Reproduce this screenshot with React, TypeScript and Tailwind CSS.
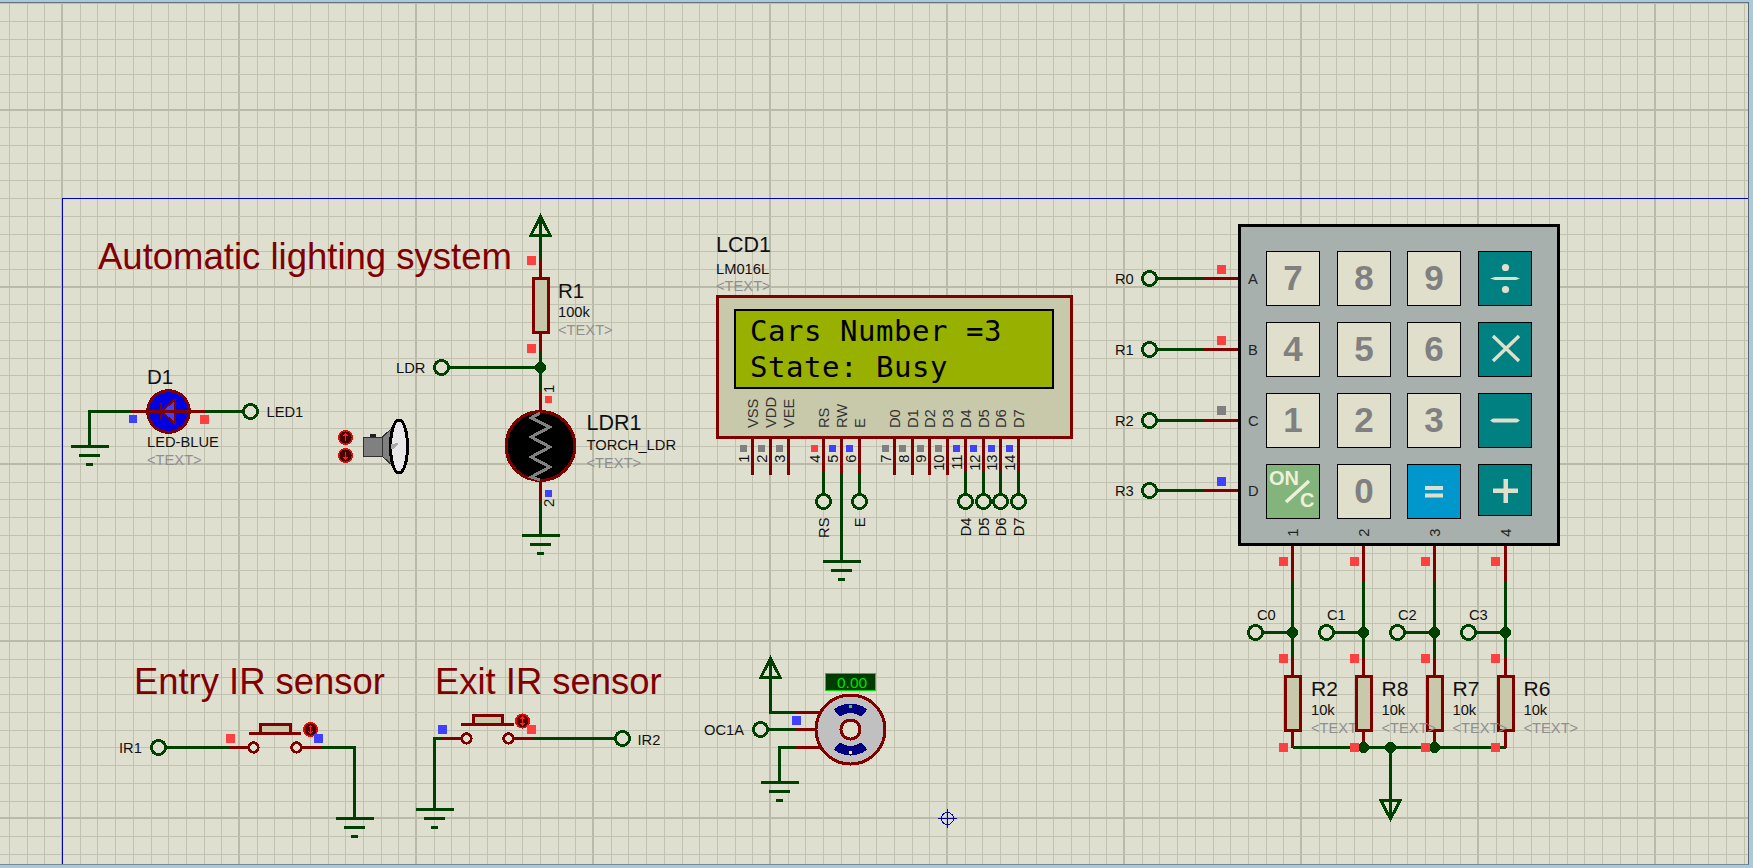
import React from "react";

const GREEN = "#004000";
const RED = "#800000";
const PAPER = "#dfdfd0";
const BODY = "#c8c8aa";
const SQ_RED = "#ff4040";
const SQ_BLUE = "#4040ff";
const SQ_GREY = "#808080";
const INK = "#111111";
const FAINT = "#8f8f8f";

type Pts = [number, number][];

function Line({ pts, c = GREEN, w = 3 }: { pts: Pts; c?: string; w?: number }) {
  return <polyline points={pts.map((p) => p.join(",")).join(" ")} fill="none" stroke={c} strokeWidth={w} strokeLinejoin="miter" />;
}
function Sq({ x, y, c = SQ_RED, s = 9 }: { x: number; y: number; c?: string; s?: number }) {
  return <rect x={x} y={y} width={s} height={s} fill={c} />;
}
function Term({ x, y }: { x: number; y: number }) {
  return <circle cx={x} cy={y} r={7} fill={PAPER} stroke={GREEN} strokeWidth={3} />;
}
function Node({ x, y }: { x: number; y: number }) {
  return <circle cx={x} cy={y} r={5.5} fill={GREEN} />;
}
function Gnd({ x, y }: { x: number; y: number }) {
  return (
    <g>
      <Line pts={[[x - 19, y], [x + 19, y]]} />
      <Line pts={[[x - 10.5, y + 9], [x + 10.5, y + 9]]} />
      <Line pts={[[x - 3.5, y + 18], [x + 3.5, y + 18]]} />
    </g>
  );
}
function Arrow({ x, tip, base }: { x: number; tip: number; base: number }) {
  return <polygon points={`${x},${tip} ${x + 9.5},${base} ${x - 9.5},${base}`} fill="none" stroke={GREEN} strokeWidth={3} />;
}
function Res({ x, y1, y2 }: { x: number; y1: number; y2: number }) {
  return <rect x={x - 7.5} y={y1} width={15} height={y2 - y1} fill={BODY} stroke={RED} strokeWidth={3} />;
}
function T({ x, y, s = 14.7, c = INK, a, r, children }: { x: number; y: number; s?: number; c?: string; a?: "start" | "middle" | "end"; r?: boolean; children: React.ReactNode }) {
  return (
    <text x={x} y={y} fontSize={s} fill={c} textAnchor={a} transform={r ? `rotate(-90 ${x} ${y})` : undefined}>
      {children}
    </text>
  );
}
function Push({ l, r, y, bx1, bx2, cx1, cx2, by, dx, dy }: { l: number; r: number; y: number; bx1: number; bx2: number; cx1: number; cx2: number; by: number; dx: number; dy: number }) {
  return (
    <g>
      <circle cx={l} cy={y} r={4.7} fill={PAPER} stroke={RED} strokeWidth={3} />
      <circle cx={r} cy={y} r={4.7} fill={PAPER} stroke={RED} strokeWidth={3} />
      <rect x={cx1} y={by - 9} width={cx2 - cx1} height={9} fill={BODY} stroke={RED} strokeWidth={3} />
      <Line pts={[[bx1, by], [bx2, by]]} c={RED} />
      <Dot x={dx} y={dy} />
      <Line pts={[[dx, dy - 4], [dx, dy + 4]]} c="#ff2020" w={1.5} />
      <polyline points={`${dx - 2},${dy - 2} ${dx},${dy - 4} ${dx + 2},${dy - 2}`} fill="none" stroke="#ff2020" strokeWidth={1} />
      <polyline points={`${dx - 2},${dy + 2} ${dx},${dy + 4} ${dx + 2},${dy + 2}`} fill="none" stroke="#ff2020" strokeWidth={1} />
    </g>
  );
}
function Dot({ x, y }: { x: number; y: number }) {
  return <circle cx={x} cy={y} r={6.8} fill="#4a0000" stroke="#ff0000" strokeWidth={1.5} />;
}
function Sector({ cx, cy, top }: { cx: number; cy: number; top: boolean }) {
  const ro = 26;
  const ri = 16.5;
  const a = (40 * Math.PI) / 180;
  const s = top ? -1 : 1;
  const p = (rad: number, sign: number) => `${cx + sign * rad * Math.sin(a)},${cy + s * rad * Math.cos(a)}`;
  const sweepOut = top ? 1 : 0;
  const sweepIn = top ? 0 : 1;
  return <path d={`M${p(ro, -1)} A${ro},${ro} 0 0 ${sweepOut} ${p(ro, 1)} L${p(ri, 1)} A${ri},${ri} 0 0 ${sweepIn} ${p(ri, -1)} Z`} fill="#000080" />;
}

const GX = Array.from({ length: 100 }, (_, i) => i - 4);
const GY = Array.from({ length: 50 }, (_, i) => i - 7);

function Paper() {
  return (
    <svg width={1753} height={868} className="absolute left-0 top-[-3px]" shapeRendering="crispEdges">
      {GX.map((k) => {
        const major = k % 10 === 0;
        const x = Math.floor(62.5 + 17.7 * k);
        return <rect key={k} x={major ? x - 1 : x} y={0} width={major ? 2 : 1} height={868} fill={major ? "#b9baa8" : "#c0c1af"} />;
      })}
      {GY.map((k) => {
        const major = k % 10 === 0;
        const y = Math.floor(110 + 17.72 * k);
        return <rect key={k} x={0} y={major ? y - 1 : y} width={1753} height={major ? 2 : 1} fill={major ? "#b9baa8" : "#c0c1af"} />;
      })}
    </svg>
  );
}

type KeyDef = { label?: string; kind: "digit" | "div" | "mul" | "sub" | "add" | "eq" | "on" };
const KEYS: KeyDef[] = [
  { label: "7", kind: "digit" }, { label: "8", kind: "digit" }, { label: "9", kind: "digit" }, { kind: "div" },
  { label: "4", kind: "digit" }, { label: "5", kind: "digit" }, { label: "6", kind: "digit" }, { kind: "mul" },
  { label: "1", kind: "digit" }, { label: "2", kind: "digit" }, { label: "3", kind: "digit" }, { kind: "sub" },
  { kind: "on" }, { label: "0", kind: "digit" }, { kind: "eq" }, { kind: "add" },
];

const INKL = "#dfdfcb";

function Key({ k }: { k: KeyDef }) {
  if (k.kind === "digit") {
    return <div className="flex h-[55px] w-[54px] items-center justify-center border border-black bg-[#dfdfcb] text-[35px] font-bold text-[#808080]">{k.label}</div>;
  }
  if (k.kind === "on") {
    return (
      <div className="h-[55px] w-[54px] border border-black bg-[#82b47c]">
        <svg width={52} height={53} className="block">
          <text x={2} y={20} fontSize={20} fontWeight={700} fill="#eef0d8">ON</text>
          <text x={33} y={42} fontSize={20} fontWeight={700} fill="#eef0d8">C</text>
          <line x1={19} y1={37} x2={42} y2={16} stroke="#eef0d8" strokeWidth={3.5} />
        </svg>
      </div>
    );
  }
  if (k.kind === "eq") {
    return (
      <div className="h-[55px] w-[54px] border border-black bg-[#0098cc]">
        <svg width={52} height={53} className="block">
          <rect x={17} y={21} width={18} height={4} fill={INKL} />
          <rect x={17} y={28.5} width={18} height={4} fill={INKL} />
        </svg>
      </div>
    );
  }
  const h = k.kind === "add" ? "h-[52px]" : "h-[55px]";
  return (
    <div className={`w-[54px] border border-black bg-[#008080] ${h}`}>
      <svg width={52} height={53} className="block">
        {k.kind === "div" && (
          <g fill={INKL}>
            <circle cx={26.5} cy={15.5} r={3.6} />
            <circle cx={26.5} cy={37.5} r={3.6} />
            <polygon points="11,26.5 16,25 37,25 41,26.5 37,28 16,28" />
          </g>
        )}
        {k.kind === "mul" && <g stroke={INKL} strokeWidth={3.4}><line x1={14} y1={13} x2={40} y2={38} /><line x1={40} y1={13} x2={14} y2={38} /></g>}
        {k.kind === "sub" && <polygon points="11,26.5 14,24.5 38,24.5 41,26.5 38,28.5 14,28.5" fill={INKL} />}
        {k.kind === "add" && <g fill={INKL}><rect x={14} y={23.5} width={25} height={4.5} /><rect x={24.5} y={14} width={4.5} height={24} /></g>}
      </svg>
    </div>
  );
}

function Keypad() {
  return (
    <div className="absolute left-[1238px] top-[221px] h-[322px] w-[322px] border-[3px] border-black bg-[#a8b0ae] pl-[25px] pt-[24px]">
      <div className="grid grid-cols-[71px_70px_71px_54px] grid-rows-[71px_71px_71px_55px]">
        {KEYS.map((k, i) => <Key key={i} k={k} />)}
      </div>
    </div>
  );
}

function Lcd() {
  return (
    <div className="absolute left-[716px] top-[292px] h-[144px] w-[357px] border-[3px] border-[#800000] bg-[#c8c8aa] pl-[15px] pt-[11px]">
      <div className="h-[80px] w-[320px] border-2 border-black bg-[#98b000] pl-[14px] pt-[2px] font-['DejaVu_Sans_Mono',monospace] text-[29px] leading-[36px] tracking-[0.55px] whitespace-pre text-black">
        <div>Cars Number =3</div>
        <div>State: Busy</div>
      </div>
    </div>
  );
}

const LCD_PINS: { x: number; n: string; name: string; sq: number; sc: string }[] = [
  { x: 752.5, n: "1", name: "VSS", sq: 740, sc: SQ_GREY },
  { x: 770.5, n: "2", name: "VDD", sq: 758, sc: SQ_GREY },
  { x: 788.5, n: "3", name: "VEE", sq: 776, sc: SQ_GREY },
  { x: 823.5, n: "4", name: "RS", sq: 811, sc: SQ_RED },
  { x: 841.5, n: "5", name: "RW", sq: 829, sc: SQ_BLUE },
  { x: 859.5, n: "6", name: "E", sq: 846, sc: SQ_BLUE },
  { x: 894.5, n: "7", name: "D0", sq: 882, sc: SQ_GREY },
  { x: 912.5, n: "8", name: "D1", sq: 899, sc: SQ_GREY },
  { x: 929.5, n: "9", name: "D2", sq: 917, sc: SQ_GREY },
  { x: 947.5, n: "10", name: "D3", sq: 935, sc: SQ_GREY },
  { x: 965.5, n: "11", name: "D4", sq: 953, sc: SQ_BLUE },
  { x: 983.5, n: "12", name: "D5", sq: 970, sc: SQ_BLUE },
  { x: 1000.5, n: "13", name: "D6", sq: 988, sc: SQ_BLUE },
  { x: 1018.5, n: "14", name: "D7", sq: 1006, sc: SQ_BLUE },
];
const TERM_D = [
  { x: 965.5, n: "D4" },
  { x: 983.5, n: "D5" },
  { x: 1000.5, n: "D6" },
  { x: 1018.5, n: "D7" },
];
const ROWS = [
  { y: 278.5, n: "R0", l: "A", sy: 265, c: SQ_RED },
  { y: 349.5, n: "R1", l: "B", sy: 336, c: SQ_RED },
  { y: 420.5, n: "R2", l: "C", sy: 406, c: SQ_GREY },
  { y: 490.5, n: "R3", l: "D", sy: 477, c: SQ_BLUE },
];
const COLS = [
  { x: 1292.5, n: "1", c: "C0", tx: 1255.5, lx: 1257, sq: 1279, r: "R2", rx: 1311 },
  { x: 1363.5, n: "2", c: "C1", tx: 1326.5, lx: 1327, sq: 1350, r: "R8", rx: 1381.5 },
  { x: 1434.5, n: "3", c: "C2", tx: 1397.5, lx: 1398, sq: 1421, r: "R7", rx: 1452.5 },
  { x: 1505.5, n: "4", c: "C3", tx: 1468.5, lx: 1469, sq: 1491, r: "R6", rx: 1523.5 },
];

function Drawing() {
  return (
    <svg width={1753} height={868} className="absolute left-0 top-[-3px]" shapeRendering="crispEdges">
      {/* sheet border */}
      <rect x={62} y={198} width={1700} height={1} fill="#0000c0" />
      <rect x={62} y={198} width={1} height={680} fill="#0000c0" />

      {/* titles */}
      <g>
        <T x={98} y={269} s={36.5} c={RED}>Automatic lighting system</T>
        <T x={134} y={694} s={36.4} c={RED}>Entry IR sensor</T>
        <T x={435} y={694} s={36.4} c={RED}>Exit IR sensor</T>
      </g>

      {/* LED D1 */}
      <Line pts={[[89.5, 446], [89.5, 411.5], [132, 411.5]]} />
      <Gnd x={89.5} y={446.5} />
      <Line pts={[[132, 411.5], [206, 411.5]]} c={RED} />
      <Line pts={[[206, 411.5], [244, 411.5]]} />
      <circle cx={168.5} cy={411.5} r={20.8} fill="#0000e0" stroke={RED} strokeWidth={3} />
      <polygon points="161,411.5 175,399.5 175,423.5" fill="#4040ff" stroke={RED} strokeWidth={2} />
      <Line pts={[[147, 411.5], [190, 411.5]]} c={RED} />
      <Line pts={[[160.5, 403], [160.5, 420]]} c={RED} w={2} />
      <Term x={250.5} y={411.5} />
      <Sq x={129} y={415} c={SQ_BLUE} s={8} />
      <Sq x={199.5} y={415} s={9} />
      <T x={147} y={384} s={20.5}>D1</T>
      <T x={147} y={447}>LED-BLUE</T>
      <T x={147} y={465} c={FAINT}>&lt;TEXT&gt;</T>
      <T x={266.5} y={417}>LED1</T>

      {/* speaker */}
      <polygon points="382,437.5 394,426 394,467 382,456" fill="#808080" stroke="#303030" strokeWidth={1} />
      <rect x={363.5} y={437.5} width={18.5} height={18.5} fill="#808080" stroke="#303030" strokeWidth={1} />
      <rect x={370} y={434} width={6} height={3} fill="#202020" />
      <ellipse cx={399} cy={446.5} rx={8.5} ry={26.5} fill="#e8e8e8" stroke="#000" strokeWidth={3} />
      <polygon points="391,444 398,443 398,445 393,449 391,449" fill="#a8a8a8" />
      <Dot x={345.5} y={437.5} />
      <Dot x={345.5} y={455.5} />
      <Line pts={[[345.5, 434], [345.5, 441]]} c="#ff2020" w={1} />
      <polyline points="343.5,436 345.5,434 347.5,436" fill="none" stroke="#ff2020" strokeWidth={1} />
      <Line pts={[[345.5, 452], [345.5, 459]]} c="#ff2020" w={1} />
      <polyline points="343.5,457 345.5,459 347.5,457" fill="none" stroke="#ff2020" strokeWidth={1} />

      {/* R1 / LDR1 */}
      <Line pts={[[540.5, 217], [540.5, 259.5]]} />
      <Arrow x={540.5} tip={216.5} base={235} />
      <Line pts={[[540.5, 259.5], [540.5, 350.5]]} c={RED} />
      <Res x={540.5} y1={278} y2={332} />
      <Line pts={[[540.5, 350.5], [540.5, 392]]} />
      <Line pts={[[448, 367.5], [540.5, 367.5]]} />
      <Node x={540.5} y={367.5} />
      <Term x={441.5} y={367.5} />
      <Line pts={[[540.5, 392], [540.5, 502]]} c={RED} />
      <circle cx={540.5} cy={446} r={34.5} fill="#000" stroke={RED} strokeWidth={3} />
      <polyline points="540,413 531,418 550,427 531,437 550,447 531,457 550,467 531,477 540,480" fill="none" stroke="#808080" strokeWidth={3} />
      <Line pts={[[540.5, 502], [540.5, 535]]} />
      <Gnd x={540.5} y={535.5} />
      <Sq x={527} y={256} />
      <Sq x={527} y={344} />
      <Sq x={545} y={396} s={7} />
      <Sq x={545} y={490} c={SQ_BLUE} s={7} />
      <T x={554} y={393} s={14.7} r>1</T>
      <T x={554} y={507} s={14.7} r>2</T>
      <T x={558} y={298} s={20.5}>R1</T>
      <T x={558} y={317}>100k</T>
      <T x={558} y={334.5} c={FAINT}>&lt;TEXT&gt;</T>
      <T x={586.5} y={430} s={21.5}>LDR1</T>
      <T x={586.5} y={450}>TORCH_LDR</T>
      <T x={586.5} y={468} c={FAINT}>&lt;TEXT&gt;</T>
      <T x={396} y={373}>LDR</T>

      {/* LCD */}
      <T x={716} y={252} s={21.5}>LCD1</T>
      <T x={716} y={273.5}>LM016L</T>
      <T x={716} y={291} c={FAINT}>&lt;TEXT&gt;</T>
      {LCD_PINS.map((p) => (
        <g key={p.n}>
          <Line pts={[[p.x, 438], [p.x, 474.5]]} c={RED} />
          <Sq x={p.sq} y={445} c={p.sc} s={7} />
          <T x={p.x - 3.5} y={454.5} a="end" r>{p.n}</T>
          <T x={p.x + 5.5} y={428} c="#333" r>{p.name}</T>
        </g>
      ))}
      <Line pts={[[823.5, 472], [823.5, 495]]} />
      <Line pts={[[859.5, 474], [859.5, 495]]} />
      <Line pts={[[841.5, 474], [841.5, 561]]} />
      <Gnd x={841.5} y={561.5} />
      <Term x={823.5} y={501.5} />
      <Term x={859.5} y={501.5} />
      <T x={829} y={517.5} a="end" r>RS</T>
      <T x={865} y={517.5} a="end" r>E</T>
      {TERM_D.map((d) => (
        <g key={d.n}>
          <Line pts={[[d.x, 472], [d.x, 495]]} />
          <Term x={d.x} y={501.5} />
          <T x={d.x + 5} y={517.5} a="end" r>{d.n}</T>
        </g>
      ))}

      {/* keypad connections */}
      {ROWS.map((r) => (
        <g key={r.n}>
          <Line pts={[[1155, r.y], [1203.5, r.y]]} />
          <Line pts={[[1203.5, r.y], [1238, r.y]]} c={RED} />
          <Term x={1149.5} y={r.y} />
          <Sq x={1217} y={r.sy} c={r.c} />
          <T x={1115} y={r.y + 5.5}>{r.n}</T>
          <T x={1248} y={r.y + 5.5} c="#222">{r.l}</T>
        </g>
      ))}
      {COLS.map((k) => (
        <g key={k.n}>
          <T x={k.x + 5} y={528.5} a="end" c="#222" r>{k.n}</T>
          <Line pts={[[k.x, 546], [k.x, 581]]} c={RED} />
          <Line pts={[[k.x, 581], [k.x, 658]]} />
          <Line pts={[[k.x, 658], [k.x, 747.5]]} c={RED} />
          <Line pts={[[k.tx + 6, 632.5], [k.x, 632.5]]} />
          <Node x={k.x} y={632.5} />
          <Term x={k.tx} y={632.5} />
          <T x={k.lx} y={620}>{k.c}</T>
          <T x={k.rx} y={696} s={21}>{k.r}</T>
          <T x={k.rx} y={715}>10k</T>
        </g>
      ))}
      <T x={1311} y={733} c={FAINT}>&lt;TEXT&gt;</T>
      {COLS.map((k) => <Res key={k.n} x={k.x} y1={676} y2={730} />)}
      <T x={1381.5} y={733} c={FAINT}>&lt;TEXT&gt;</T>
      <T x={1452.5} y={733} c={FAINT}>&lt;TEXT&gt;</T>
      <T x={1523.5} y={733} c={FAINT}>&lt;TEXT&gt;</T>
      <Line pts={[[1292.5, 747.5], [1505.5, 747.5]]} />
      <Line pts={[[1292.5, 730], [1292.5, 747.5]]} c={RED} />
      <Line pts={[[1505.5, 730], [1505.5, 747.5]]} c={RED} />
      <Node x={1363.5} y={747.5} />
      <Node x={1390.5} y={747.5} />
      <Node x={1434.5} y={747.5} />
      <Line pts={[[1390.5, 747.5], [1390.5, 818]]} />
      <Arrow x={1390.5} tip={819} base={800.5} />
      {COLS.map((k) => (
        <g key={k.n}>
          <Sq x={k.sq} y={557} />
          <Sq x={k.sq} y={654} />
          <Sq x={k.sq} y={743} />
        </g>
      ))}

      {/* IR1 */}
      <Line pts={[[165, 747.5], [229, 747.5]]} />
      <Line pts={[[229, 747.5], [249, 747.5]]} c={RED} />
      <Line pts={[[301, 747.5], [321, 747.5]]} c={RED} />
      <Line pts={[[321, 747.5], [354.5, 747.5], [354.5, 818.5]]} />
      <Push l={253.5} r={296.5} y={747.5} bx1={249} bx2={301} cx1={260.5} cx2={290} by={733.5} dx={310.5} dy={729.5} />
      <Gnd x={354.5} y={818.5} />
      <Term x={158.5} y={747.5} />
      <Sq x={226} y={734} />
      <Sq x={314} y={734} c={SQ_BLUE} />
      <T x={119} y={752.5}>IR1</T>

      {/* IR2 */}
      <Line pts={[[434.5, 809], [434.5, 738.5], [442, 738.5]]} />
      <Line pts={[[442, 738.5], [462, 738.5]]} c={RED} />
      <Line pts={[[513, 738.5], [533.5, 738.5]]} c={RED} />
      <Line pts={[[533.5, 738.5], [616, 738.5]]} />
      <Push l={466.5} r={508.5} y={738.5} bx1={461} bx2={514} cx1={473} cx2={502.5} by={724.5} dx={522.5} dy={721} />
      <Gnd x={434.5} y={809.5} />
      <Term x={622.5} y={738.5} />
      <Sq x={438} y={725} c={SQ_BLUE} />
      <Sq x={527} y={725} />
      <T x={637.5} y={744.5}>IR2</T>

      {/* motor */}
      <Line pts={[[770.5, 659], [770.5, 712.5], [796, 712.5]]} />
      <Arrow x={770.5} tip={658.5} base={677} />
      <Line pts={[[796, 712.5], [822, 712.5]]} c={RED} />
      <Line pts={[[767, 729.5], [796, 729.5]]} />
      <Line pts={[[796, 729.5], [818, 729.5]]} c={RED} />
      <Line pts={[[779.5, 782], [779.5, 747.5], [796, 747.5]]} />
      <Line pts={[[796, 747.5], [822, 747.5]]} c={RED} />
      <Gnd x={779.5} y={782.5} />
      <Term x={760.5} y={729.5} />
      <circle cx={850.5} cy={729.5} r={34.5} fill="#c0c0c0" stroke={RED} strokeWidth={3} />
      <Sector cx={850.5} cy={729.5} top />
      <Sector cx={850.5} cy={729.5} top={false} />
      <circle cx={850.5} cy={729.5} r={9.5} fill={PAPER} stroke={RED} strokeWidth={3} />
      <rect x={849} y={705} width={3} height={3} fill="#00ff00" />
      <rect x={849} y={751} width={3} height={3} fill="#ffff00" />
      <rect x={825.5} y={673.5} width={50} height={17} fill="#003c00" stroke="#00e000" strokeWidth={1} />
      <T x={837} y={688} c="#00e000" s={15.5}>0.00</T>
      <Sq x={792} y={716} c={SQ_BLUE} />
      <T x={704} y={735}>OC1A</T>

      {/* origin */}
      <circle cx={947.5} cy={818.5} r={6} fill="none" stroke="#0000c0" strokeWidth={1} />
      <rect x={938} y={818} width={19} height={1} fill="#0000c0" />
      <rect x={947} y={809} width={1} height={19} fill="#0000c0" />
    </svg>
  );
}

export default function App() {
  return (
    <div className="h-[868px] w-[1753px] overflow-hidden bg-[#a6cae0] pt-[2px] font-['Liberation_Sans',Arial,sans-serif]">
      <div className="relative h-[863px] w-[1749px] overflow-hidden border-t border-r border-b border-t-[#6a7078] border-r-[#5e6670] border-b-[#7c8890] bg-[#dfdfd0]">
        <Paper />
        <Lcd />
        <Keypad />
        <Drawing />
      </div>
    </div>
  );
}
